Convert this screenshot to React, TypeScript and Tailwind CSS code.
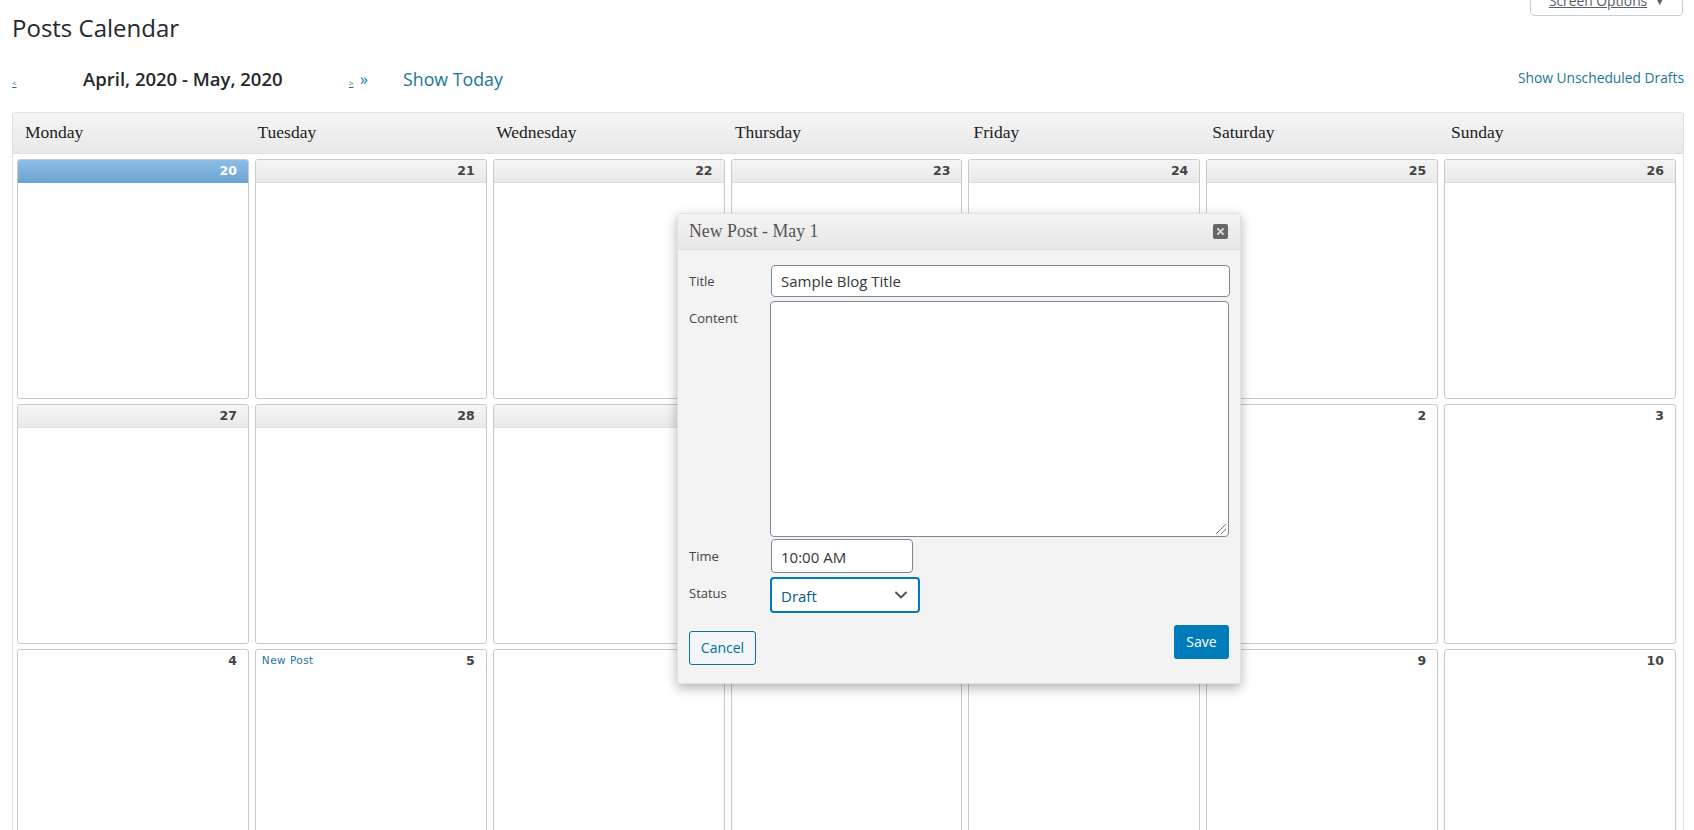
import { ChevronDown } from "lucide-react";

const DAYS = ["Monday", "Tuesday", "Wednesday", "Thursday", "Friday", "Saturday", "Sunday"];

const CELLS = [
  { n: 20, head: "today" }, { n: 21, head: "past" }, { n: 22, head: "past" }, { n: 23, head: "past" }, { n: 24, head: "past" }, { n: 25, head: "past" }, { n: 26, head: "past" },
  { n: 27, head: "past" }, { n: 28, head: "past" }, { n: 29, head: "past" }, { n: 30, head: "past" }, { n: 1, head: "none" }, { n: 2, head: "none" }, { n: 3, head: "none" },
  { n: 4, head: "none" }, { n: 5, head: "none", link: true }, { n: 6, head: "none" }, { n: 7, head: "none" }, { n: 8, head: "none" }, { n: 9, head: "none" }, { n: 10, head: "none" },
];

const sans = "font-['Open_Sans',sans-serif]";

function DayCell({ n, head, link }: { n: number; head: string; link?: boolean }) {
  const headClass =
    head === "today"
      ? "bg-gradient-to-b from-[#8cbde6] to-[#6ea4d2] text-white border-b border-[#6ea4d2]"
      : head === "past"
        ? "bg-gradient-to-b from-[#f5f5f5] to-[#e9e9e9] text-[#444] border-b border-[#dfdfdf]"
        : "text-[#444]";
  return (
    <div className="h-[240px] rounded-[3px] border border-[#c9c9c9] bg-white overflow-hidden">
      <div className={`h-[23px] flex items-center justify-between pl-[6px] pr-[11px] font-['DejaVu_Sans',sans-serif] ${headClass}`}>
        {link ? <a className="-mt-[2px] text-[10.5px] tracking-[0.45px] text-[#21759b]">New Post</a> : <span />}
        <span className="text-[12.5px] font-bold">{n}</span>
      </div>
    </div>
  );
}

function Field({ label, top, children }: { label: string; top: string; children: React.ReactNode }) {
  return (
    <div className="flex items-start">
      <label className={`w-[81px] shrink-0 text-[13px] text-[#444] ${top}`}>{label}</label>
      {children}
    </div>
  );
}

function NewPostDialog() {
  return (
    <div className={`absolute left-[677px] top-[213px] w-[564px] h-[471px] rounded-[3px] border border-[#e2e2e2] bg-[#f3f3f4] shadow-[0_4px_12px_rgba(0,0,0,0.3)] ${sans}`}>
      <div className="h-[36px] flex items-center justify-between pl-[11px] pr-[12px] bg-gradient-to-b from-[#f4f4f4] to-[#e7e7e7] border-b border-[#dfdfdf]">
        <span className="text-[17.8px] text-[#555] font-['Liberation_Serif',serif]">New Post - May 1</span>
        <span className="size-[15px] rounded-[2px] bg-[#666] flex items-center justify-center">
          <svg viewBox="0 0 10 10" className="size-[9px]">
            <path d="M1.5 1.5 8.5 8.5M8.5 1.5 1.5 8.5" stroke="#d8d8d8" strokeWidth="2.2" />
          </svg>
        </span>
      </div>
      <div className="pl-[11px] pr-[10px] pt-[15px]">
        <Field label="Title" top="pt-[7px]">
          <div className="w-[459px] h-[32px] ml-[1px] rounded-[4px] border border-[#7e8993] bg-white pl-[9px] text-[15px] leading-[31px] text-[#32373c]">
            Sample Blog Title
          </div>
        </Field>
        <Field label="Content" top="pt-[12px]">
          <div className="relative w-[459px] h-[236px] mt-[4px] rounded-[4px] border border-[#7e8993] bg-white">
            <svg viewBox="0 0 12 12" className="absolute right-[1px] bottom-[1px] size-[12px]">
              <path d="M1 11 11 1M6 11 11 6" stroke="#666" strokeWidth="0.9" />
            </svg>
          </div>
        </Field>
        <Field label="Time" top="pt-[10px]">
          <div className="w-[142px] h-[34px] ml-[1px] mt-[2px] rounded-[4px] border border-[#7e8993] bg-white pl-[9px] text-[15px] leading-[35px] text-[#32373c]">
            10:00 AM
          </div>
        </Field>
        <Field label="Status" top="pt-[11px]">
          <div className="w-[150px] h-[36px] mt-[4px] rounded-[4px] border-2 border-[#007cba] bg-white pl-[9px] pr-[7px] flex items-center justify-between text-[15px] text-[#016087]">
            <span className="pt-[2px]">Draft</span>
            <ChevronDown className="size-[20px] text-[#555]" strokeWidth={2.4} />
          </div>
        </Field>
        <div className="flex items-start justify-between pr-[1px] mt-[12px]">
          <button className="w-[67px] h-[34px] mt-[6px] pb-[2px] rounded-[3px] border border-[#0071a1] bg-[#f3f5f6] text-[14px] text-[#0071a1]">Cancel</button>
          <button className="w-[55px] h-[34px] pb-[2px] rounded-[3px] bg-[#007cba] text-[14px] text-white">Save</button>
        </div>
      </div>
    </div>
  );
}

export default function App() {
  return (
    <div className={`relative h-[830px] overflow-hidden bg-white pl-[12px] pr-[10px] ${sans}`}>
      {/* Screen options tab, pushed up past the top edge */}
      <div className="absolute right-[11px] -top-[13px] w-[153px] h-[29px] rounded-b-[4px] border border-[#ccd0d4] bg-white flex items-center justify-center gap-2 text-[13.8px] text-[#555d66]">
        <span className="underline">Screen Options</span>
        <span className="text-[9px]">▼</span>
      </div>

      <h1 className="pt-[12px] h-[62px] text-[24px] leading-[32px] text-[#23282d]">Posts Calendar</h1>

      <div className="flex items-center h-[34px] text-[#21759b]">
        <a className="w-[71px] text-[8px] underline pt-[7px]">&lt;</a>
        <div className="w-[266px] text-[18.5px] font-semibold text-[#23282d]">April, 2020 - May, 2020</div>
        <a className="w-[11px] text-[8px] underline pt-[7px]">&gt;</a>
        <a className="w-[43px] text-[16px]">»</a>
        <a className="text-[17.8px]">Show Today</a>
        <a className="ml-auto -mt-[2px] text-[13.8px]">Show Unscheduled Drafts</a>
      </div>

      <div className="mt-[16px] rounded-t-[3px] border border-[#e1e1e1] bg-white">
        <div className="h-[41px] overflow-hidden pl-[12px] pb-[2px] grid grid-cols-[232.5px_repeat(6,238.7px)] items-center bg-gradient-to-b from-[#f5f5f5] to-[#e9e9e9] border-b border-[#dfdfdf] font-['Liberation_Serif',serif] text-[17.5px] text-[#222]">
          {DAYS.map((d) => (
            <div key={d}>{d}</div>
          ))}
        </div>
        <div className="grid grid-cols-7 gap-x-[6px] gap-y-[5px] pl-[4px] pr-[7px] pt-[5px]">
          {CELLS.map((c) => (
            <DayCell key={c.n} n={c.n} head={c.head} link={c.link} />
          ))}
        </div>
      </div>

      <NewPostDialog />
    </div>
  );
}
